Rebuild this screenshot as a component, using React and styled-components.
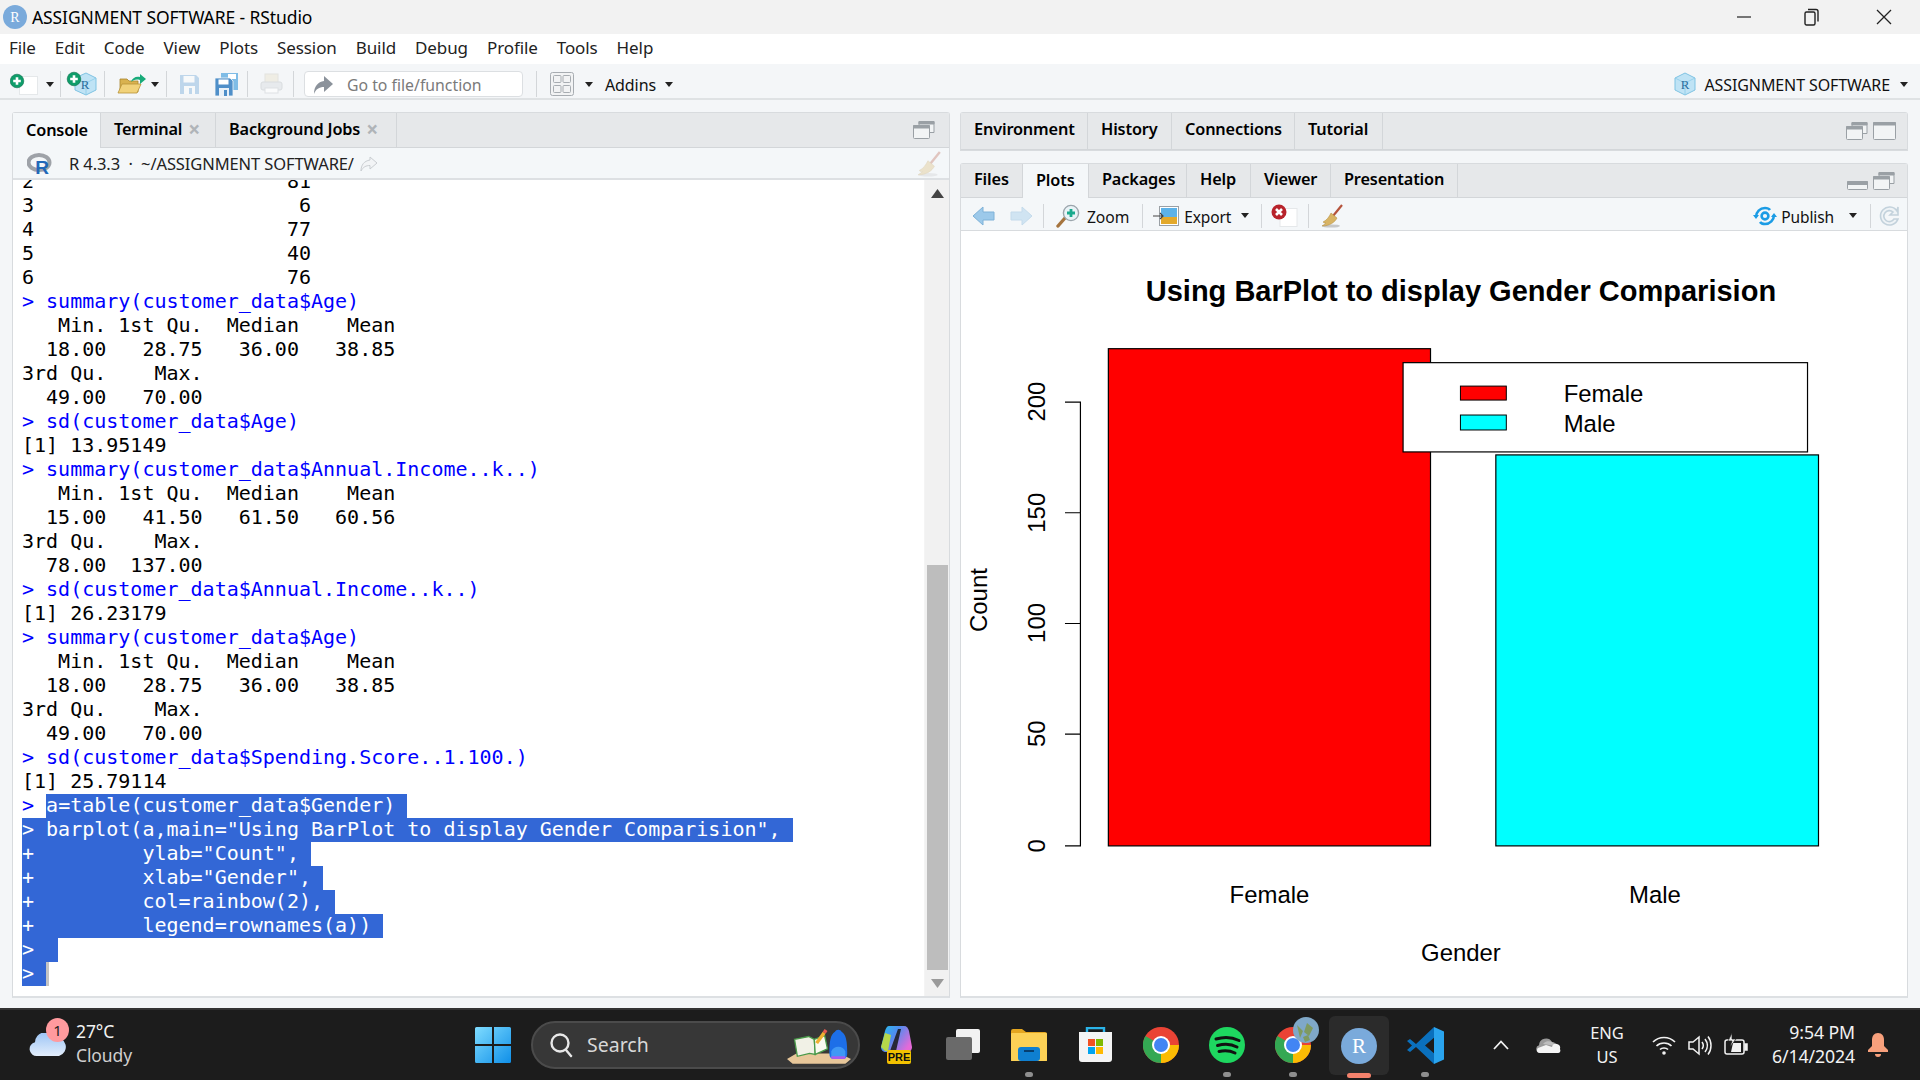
import React from "react";
import styled, { createGlobalStyle } from "styled-components";

const Global = createGlobalStyle`
  html, body { margin: 0; padding: 0; width: 1920px; height: 1080px; overflow: hidden; background: #f4f6f8; }
  * { box-sizing: border-box; }
  #root { width: 1920px; height: 1080px; }
`;

const UI = `"Noto Sans", "Open Sans", sans-serif`;

const Page = styled.div`
  width: 1920px; height: 1080px; display: flex; flex-direction: column;
  font-family: ${UI}; color: #000; background: #f4f6f8;
`;
const TitleBar = styled.div`
  height: 34px; background: #f2f2f2; display: flex; align-items: center; padding-left: 3px; flex: none;
`;
const TitleText = styled.div`font-size: 17.5px; margin-left: 5px; white-space: nowrap; flex: 1; letter-spacing: -0.1px;`;
const WinControl = styled.div`width: ${p => p.$w}px; height: 34px; display: flex; align-items: center; justify-content: center;`;
const MenuBar = styled.div`height: 30px; background: #fff; display: flex; align-items: center; padding: 0 0 3px 9px; gap: 19px; flex: none;`;
const MenuItem = styled.div`font-size: 17px; color: #222; letter-spacing: -0.1px;`;
const Toolbar = styled.div`
  height: 36px; flex: none; display: flex; align-items: center; background: #f4f6f8;
  border-bottom: 2px solid #dfe2e4; padding: 6px 0 0 10px;
`;
const Tool = styled.div`
  display: flex; align-items: center; flex: none; margin-left: ${p => p.$ml || 0}px; margin-right: ${p => p.$mr || 0}px;
`;
const Sep = styled.div`
  width: 1px; height: ${p => p.$h || 26}px; background: #d3d6d9; flex: none; margin-left: ${p => p.$ml || 0}px;
`;
const SearchBox = styled.div`
  width: 219px; height: 26px; margin-left: ${p => p.$ml}px; background: #fff; border: 1px solid #dcdfe2;
  border-radius: 4px; display: flex; align-items: center; padding: 2px 0 0 7px; gap: 13px; flex: none;
  font-size: 15.8px; color: #7a7a7a;
`;
const ToolText = styled.span`font-size: ${p => p.$s || 16}px; color: #111; margin-left: ${p => p.$ml || 0}px; white-space: nowrap; letter-spacing: -0.1px; padding-top: 2px;`;
const Push = styled.div`flex: 1;`;
const Workspace = styled.div`flex: 1; display: flex; padding: 12px 12px 10px 12px; min-height: 0;`;
const LeftPane = styled.div`
  width: 938px; flex: none; display: flex; flex-direction: column; border: 1px solid #d8dbde; border-radius: 3px 3px 0 0;
  border-bottom: 2px solid #dde0e3; background: #fff;
`;
const TabRow = styled.div`
  height: ${p => p.$h}px; flex: none; background: #e6e8ea; display: flex; align-items: stretch; border-bottom: 1px solid #d3d6d9;
`;
const Tab = styled.div`
  width: ${p => p.$w}px; flex: none; display: flex; align-items: center; padding: 0 0 ${p => p.$pb ?? 2}px ${p => p.$pl || 13}px; gap: 7px;
  font-size: 16.3px; font-weight: 600; letter-spacing: -0.15px; white-space: nowrap; color: #000;
  border-right: 1px solid #d3d6d9;
  background: ${p => p.$active ? "#f4f7f9" : "transparent"};
  margin-bottom: ${p => p.$active ? "-1px" : 0};
`;
const TabClose = styled.span`color: #b0b4b8; font-size: 21px; font-weight: 700; line-height: 1; margin-left: -1px;`;
const PaneIcons = styled.div`margin-left: auto; display: flex; align-items: center; gap: 5px; padding-right: ${p => p.$pr}px;`;
const ConsoleHeader = styled.div`
  height: 32px; flex: none; background: #f4f7f9; display: flex; align-items: center; padding: 1px 0 0 14px;
  border-bottom: 2px solid #dde0e3; font-size: 16.5px; color: #222; letter-spacing: -0.1px;
`;
const HeaderText = styled.span`margin-left: 16px; white-space: pre;`;
const ConsoleBody = styled.div`flex: 1; display: flex; min-height: 0; overflow: hidden;`;
const ConsoleText = styled.div`
  flex: 1; display: flex; flex-direction: column; justify-content: flex-end; padding: 0 0 10px 9px; overflow: hidden;
  font-family: "DejaVu Sans Mono", monospace; font-size: 20px; line-height: 22px;
`;
const Line = styled.div`
  height: 24px; flex: none; white-space: pre; color: ${p => p.$in ? "#0000ff" : "#000"};
`;
const Sel = styled.span`
  display: inline-block; height: 24px; vertical-align: top;
  background: #3367d6; color: #fff; padding-right: ${p => p.$pad ?? 12}px;
`;
const Prompt = styled.span`color: #0000ff; vertical-align: top;`;
const Cursor = styled.span`display: inline-block; width: 3px; height: 24px; background: #c4c4c4; vertical-align: top;`;
const Scrollbar = styled.div`
  width: 25px; flex: none; background: #f1f1f1; display: flex; flex-direction: column; align-items: center;
  border-left: 1px solid #f4f4f4;
`;
const ScrollArrow = styled.div`
  height: 26px; flex: none; display: flex; align-items: center; justify-content: center;
`;
const ScrollTrack = styled.div`flex: 1;`;
const ScrollThumb = styled.div`width: 21px; height: 405px; background: #bdbdbd; flex: none;`;
const RightCol = styled.div`flex: 1; margin-left: 10px; display: flex; flex-direction: column; gap: 12px; min-width: 0;`;
const TopPane = styled.div`border: 1px solid #d8dbde; border-bottom: 2px solid #d8dbde; border-radius: 3px 3px 0 0; height: 39px; flex: none; background: #e6e8ea;`;
const PlotPane = styled.div`
  flex: 1; display: flex; flex-direction: column; border: 1px solid #d8dbde; border-bottom: 2px solid #dde0e3; border-radius: 3px 3px 0 0; min-height: 0; background: #fff;
`;
const PlotToolbar = styled.div`
  height: 33px; flex: none; background: #f4f7f9; display: flex; align-items: center; border-bottom: 1px solid #d8dbde; padding: 3px 0 0 11px;
`;
const PlotArea = styled.div`flex: 1; min-height: 0; background: #fff;`;

const Taskbar = styled.div`
  height: 72px; flex: none; background: #1c1c1c; border-top: 2px solid #333; display: flex; align-items: stretch; color: #fff;
`;
const Weather = styled.div`width: 460px; flex: none; display: flex; align-items: center; padding-left: 29px; gap: 10px; position: relative;`;
const Badge = styled.div`
  position: absolute; left: 46px; top: 8px; width: 23px; height: 24px; border-radius: 50%; background: #ff9a9e; color: #222;
  font-size: 15px; display: flex; align-items: center; justify-content: center;
`;
const WeatherText = styled.div`font-size: 17.5px; line-height: 24px; color: #f2f2f2; letter-spacing: -0.1px; padding-bottom: 4px;`;
const Muted = styled.div`color: #cfcfcf;`;
const TaskSlot = styled.div`
  width: 66px; flex: none; display: flex; align-items: center; justify-content: center; position: relative;
`;
const ActiveBox = styled.div`
  width: 60px; height: 59px; border-radius: 6px; background: #2b2b2b; display: flex; align-items: center; justify-content: center; margin-top: 1px;
`;
const Dot = styled.div`
  position: absolute; bottom: 3px; left: 50%; margin-left: -4px; width: 8px; height: 5px; border-radius: 3px; background: #8f8f8f;
`;
const ActiveBar = styled.div`
  position: absolute; bottom: 2px; left: 50%; margin-left: -12px; width: 24px; height: 5px; border-radius: 3px; background: #f4826c;
`;
const SearchPill = styled.div`
  width: 329px; height: 48px; align-self: center; flex: none; margin: 0 4px 0 5px; border-radius: 24px; background: #373737;
  border: 2px solid #4b4b4b; display: flex; align-items: center; padding: 0 0 1px 16px; gap: 14px; font-size: 19.5px; color: #d8d8d8;
`;
const PillArt = styled.div`margin-left: auto; margin-right: 7px; display: flex;`;
const Tray = styled.div`flex: 1; display: flex; align-items: center; padding-left: 35px; color: #f2f2f2;`;
const Lang = styled.div`width: 52px; margin-left: 20px; text-align: center; font-size: 16.5px; line-height: 24px;`;
const TrayIcons = styled.div`display: flex; align-items: center; gap: 12px; margin-left: 19px;`;
const Clock = styled.div`width: 107px; margin-right: 2px; text-align: right; font-size: 17.7px; line-height: 24px; letter-spacing: -0.1px; padding-bottom: 3px;`;

/* ---------- drawings ---------- */
const Caret = ({ c = "#222" }) => (
  <svg width="8" height="5" viewBox="0 0 10 6"><path d="M0 0h10L5 6z" fill={c} /></svg>
);
const GreenPlus = ({ x, y }) => (
  <g>
    <circle cx={x} cy={y} r="6.8" fill="#0f9d6a" stroke="#0b6f4c" strokeWidth=".6" />
    <path d={`M${x - 3.8} ${y}h7.6M${x} ${y - 3.8}v7.6`} stroke="#fff" strokeWidth="2.6" />
  </g>
);
const NewFile = () => (
  <svg width="28" height="22" viewBox="0 0 28 22">
    <rect x="9.5" y="3.5" width="18" height="18" fill="#fff" stroke="#e5e8ea" />
    <GreenPlus x="7" y="8" />
  </svg>
);
const Cube = ({ w = 24, h = 24 }) => (
  <svg width={w} height={h} viewBox="0 0 24 24">
    <path d="M12 1l10 5v12l-10 5-10-5V6z" fill="#bfe3f5" stroke="#7fc3e3" />
    <path d="M2 6l10 5 10-5M12 11v12" fill="none" stroke="#8ccbe8" strokeWidth=".8" />
    <text x="12" y="17" fontSize="13" textAnchor="middle" fill="#2a6f9e" fontFamily="Liberation Serif, serif">R</text>
  </svg>
);
const NewProject = () => (
  <svg width="32" height="26" viewBox="0 0 32 26">
    <path d="M20 2l10 5v12l-10 5-11-5V7z" fill="#bfe3f5" stroke="#7fc3e3" />
    <path d="M9 7l11 5 10-5M20 12v12" fill="none" stroke="#8ccbe8" strokeWidth=".8" />
    <text x="19" y="18" fontSize="13" textAnchor="middle" fill="#2a6f9e" fontFamily="Liberation Serif, serif">R</text>
    <GreenPlus x="8" y="8" />
  </svg>
);
const OpenFolder = () => (
  <svg width="30" height="22" viewBox="0 0 30 22">
    <path d="M3 6h7l2 2h9v11H3z" fill="#d9b24f" stroke="#a9852f" strokeWidth=".8" />
    <path d="M1 20l4-9h19l-4 9z" fill="#f1d27a" stroke="#b89339" strokeWidth=".8" />
    <path d="M14 9c1-4 5-6 9-5V1l6 5-6 5V7c-4-1-7 0-9 2z" fill="#18ab7a" />
  </svg>
);
const Save = ({ o = 1, c = "#5b9bd5" }) => (
  <svg width="21" height="21" viewBox="0 0 21 21" opacity={o}>
    <path d="M1 1h16l3 3v16H1z" fill={c} />
    <rect x="4.5" y="2" width="11" height="6.5" fill="#fff" />
    <rect x="5" y="12" width="11" height="8" fill="#fff" />
    <rect x="10" y="14" width="3" height="6" fill={c} />
  </svg>
);
const SaveAll = () => (
  <svg width="24" height="23" viewBox="0 0 24 23">
    <path d="M7 0h17v17H7z" fill="#7fbce6" />
    <rect x="14" y="1" width="8" height="5" fill="#fff" />
    <path d="M1 5h15l3 3v15H1z" fill="#4f8fc9" stroke="#f4f6f8" strokeWidth=".8" />
    <rect x="4.5" y="6.5" width="10" height="5" fill="#fff" />
    <rect x="5" y="15" width="10" height="8" fill="#e9f1f8" />
    <rect x="10" y="17" width="3" height="6" fill="#4f8fc9" />
  </svg>
);
const Printer = () => (
  <svg width="23" height="22" viewBox="0 0 23 22" opacity=".6">
    <rect x="5" y="1" width="13" height="9" fill="#ece8d8" stroke="#d8d8d0" />
    <rect x="1" y="9" width="21" height="8" rx="2" fill="#dfe3e6" stroke="#c8ccd0" />
    <rect x="5" y="15" width="13" height="5" fill="#fff" stroke="#d0d4d8" />
  </svg>
);
const GoArrow = () => (
  <svg width="22" height="22" viewBox="0 0 22 22"><path d="M12 2l9 8-9 8v-5c-5 0-8 2-10 7 0-8 4-12 10-13z" fill="#8b929b" /></svg>
);
const PaneGrid = () => (
  <svg width="24" height="24" viewBox="0 0 24 24" fill="#f2f3f4" stroke="#a7acb1">
    <rect x=".5" y=".5" width="23" height="23" rx="2" />
    <rect x="3.5" y="3.5" width="7.5" height="7" rx="1" />
    <rect x="13" y="3.5" width="7.5" height="7" rx="1" />
    <rect x="3.5" y="13.5" width="7.5" height="7" rx="1" />
    <rect x="13" y="13.5" width="7.5" height="7" rx="1" />
  </svg>
);
const RLogo = () => (
  <svg width="26" height="22" viewBox="0 0 26 22">
    <ellipse cx="12" cy="9.5" rx="10.500" ry="7.500" fill="none" stroke="#9ea2a8" strokeWidth="4" />
    <text x="15" y="21" fontSize="19" fontWeight="700" textAnchor="middle" fill="#2268b8" fontFamily="Liberation Sans, sans-serif">R</text>
  </svg>
);
const ShareArrow = () => (
  <svg width="19" height="16" viewBox="0 0 19 16"><path d="M11 1l7 6-7 6V9.5C7 9.500 4 11 2 15c0-6 3-10 9-11z" fill="#f2f4f6" stroke="#c9cdd1" /></svg>
);
const Broom = ({ o = 1, w = 24, h = 24 }) => (
  <svg width={w} height={h} viewBox="0 0 24 24" opacity={o}>
    <ellipse cx="11" cy="22" rx="9" ry="1.6" fill="#9a9a9a" opacity=".5" />
    <path d="M22 1L13 12" stroke="#b5533c" strokeWidth="2.2" />
    <path d="M11 9l6 5c-2 4-7 8-15 8 3-2 4-3 4-3-1 0-2 0-3-1 4-2 6-5 8-9z" fill="#d8b464" stroke="#b08a3c" strokeWidth=".5" />
  </svg>
);
const WinBtn = ({ v = "front" }) => (
  <svg width="22" height="18" viewBox="0 0 22 18" fill="#f2f4f5" stroke="#9aa0a5">
    {v === "front" && <path d="M6 4.500V.5h15v11h-4" />}
    {v === "front" && <path d="M6 .5h15v2.500H6z" fill="#9aa0a5" />}
    <rect x=".5" y="4.500" width="16" height="13" rx="1" />
    <path d="M.5 4.500h16v2.500H.5z" fill="#9aa0a5" />
  </svg>
);
const MaxBtn = () => (
  <svg width="23" height="18" viewBox="0 0 23 18" fill="#f2f4f5" stroke="#9aa0a5">
    <rect x=".5" y=".5" width="22" height="17" rx="1" />
    <path d="M.5 .5h22v2.500H.5z" fill="#9aa0a5" />
  </svg>
);
const MinBtn = () => (
  <svg width="21" height="18" viewBox="0 0 21 18" fill="#f2f4f5" stroke="#9aa0a5">
    <rect x=".5" y="9.500" width="20" height="8" rx="1" />
    <path d="M.5 9.500h20v3H.5z" fill="#9aa0a5" />
  </svg>
);
const NavArrow = ({ dir, o = 1 }) => (
  <svg width="23" height="20" viewBox="0 0 23 20" opacity={o} style={{ transform: dir === "r" ? "scaleX(-1)" : undefined }}>
    <path d="M1 10l10-9v5h11v8H11v5z" fill="#9cc9ea" stroke="#7eb2d8" />
  </svg>
);
const ZoomIcon = () => (
  <svg width="24" height="24" viewBox="0 0 24 24">
    <path d="M9 14L2 22" stroke="#a5743e" strokeWidth="3.4" strokeLinecap="round" />
    <circle cx="15" cy="9" r="7.6" fill="#e9f3f7" stroke="#9ba5ac" strokeWidth="1.4" />
    <path d="M11 9h8M15 5v8" stroke="#1aaa8e" strokeWidth="2.8" />
  </svg>
);
const ExportIcon = () => (
  <svg width="27" height="22" viewBox="0 0 27 22">
    <rect x="6.500" y="1.500" width="19" height="19" fill="#fff" stroke="#9aa0a5" />
    <rect x="8" y="3" width="16" height="9" fill="#5cb2e8" />
    <rect x="8" y="12" width="16" height="7" fill="#e3a92b" />
    <path d="M0 11h10M7 8l3 3-3 3" stroke="#444" strokeWidth="1.2" fill="none" />
  </svg>
);
const RemoveIcon = () => (
  <svg width="27" height="23" viewBox="0 0 27 23">
    <rect x="9" y="4.500" width="17" height="18" fill="#fff" stroke="#e5e8ea" />
    <circle cx="8" cy="8" r="7.500" fill="#b8232b" />
    <path d="M5 5l6 6M11 5l-6 6" stroke="#fff" strokeWidth="2.6" />
  </svg>
);
const PublishIcon = () => (
  <svg width="24" height="20" viewBox="0 0 24 20" fill="none" stroke="#1b9ce5" strokeWidth="2.6">
    <circle cx="12" cy="10" r="3.4" />
    <path d="M3 11c0-5 4-9 9-9 2 0 4 .6 5 2M21 9c0 5-4 9-9 9-2 0-4-.6-5-2" />
    <path d="M0 9l3 4 3-4zM18 11l3-4 3 4z" fill="#1b9ce5" stroke="none" />
  </svg>
);
const RefreshIcon = () => (
  <svg width="23" height="23" viewBox="0 0 23 23" fill="none" stroke="#c3d2dc" strokeWidth="1.6">
    <path d="M19 7a9 9 0 1 0 1 8h-4a5.500 5.500 0 1 1-1-7l-3 3h8V3z" fill="#eef3f6" />
  </svg>
);

const WinLogo = () => (
  <svg width="36" height="36" viewBox="0 0 36 36">
    <defs><linearGradient id="wl" x1="0" y1="0" x2="1" y2="1"><stop offset="0" stopColor="#7fdcff" /><stop offset="1" stopColor="#0f8fe8" /></linearGradient></defs>
    <path d="M0 1.500A1.500 1.500 0 0 1 1.500 0H17v17H0zM19 0h15.500A1.500 1.500 0 0 1 36 1.500V17H19zM0 19h17v17H1.500A1.500 1.500 0 0 1 0 34.500zM19 19h17v15.500a1.500 1.500 0 0 1-1.500 1.500H19z" fill="url(#wl)" />
  </svg>
);
const SearchGlass = () => (
  <svg width="24" height="26" viewBox="0 0 24 26" fill="none" stroke="#e8e8e8" strokeWidth="2.4">
    <circle cx="11" cy="11" r="8.500" /><path d="M17 18l5 6" strokeLinecap="round" />
  </svg>
);
const BookArt = () => (
  <svg width="64" height="40" viewBox="0 0 68 42">
    <path d="M0 36l10-6h46l12 6-6 5H6z" fill="#e8c79a" />
    <path d="M8 15l15-3 6 3 1 16-6-1-13 3z" fill="#f1f1e6" stroke="#4a9a4a" strokeWidth="1.4" />
    <path d="M29 15l11-4 3 14-13 6z" fill="#fafaf0" stroke="#4a9a4a" strokeWidth="1.4" />
    <path d="M30 18l8-11 3 2-8 11z" fill="#f0b030" /><path d="M38 7l2-3 3 2-2 3z" fill="#e85a50" />
    <path d="M45 30c0-12 1-20 6-23 1-3 6-3 7 0 5 3 6 11 6 23 0 4-2 6-5 6h-9c-3 0-5-2-5-6z" fill="#1d6fe8" />
    <path d="M47 28c2-7 13-7 15 0v5c0 2-1 3-3 3h-9c-2 0-3-1-3-3z" fill="#3f98f5" />
    <path d="M47 33h15v2c0 1-1 1-3 1h-9c-2 0-3 0-3-3z" fill="#a65cf0" />
  </svg>
);
const Copilot = () => (
  <svg width="36" height="40" viewBox="0 0 36 40">
    <defs><linearGradient id="cp" x1="0" y1="0" x2="1" y2=".6"><stop offset="0" stopColor="#25c4ea" /><stop offset=".45" stopColor="#4e8df0" /><stop offset="1" stopColor="#e46ad8" /></linearGradient></defs>
    <path d="M10 1h15c3 0 4 2 5 5l3 16c0 3-2 5-5 5H7c-3 0-5-2-5-5L6 6c1-3 2-5 4-5z" fill="url(#cp)" />
    <path d="M2 22L6 8l6 2-3 16H6z" fill="#b6d84a" />
    <path d="M19 4l3 0-5 22-6 0z" fill="#181818" opacity=".85" />
    <rect x="8" y="25" width="24" height="14" rx="2" fill="#f2c100" />
    <text x="20" y="36" fontSize="11" fontWeight="700" textAnchor="middle" fill="#111" fontFamily="Liberation Sans, sans-serif">PRE</text>
  </svg>
);
const TaskView = () => (
  <svg width="36" height="36" viewBox="0 0 36 36">
    <rect x="11" y="2" width="24" height="24" rx="2" fill="#f2f2f2" />
    <rect x="1" y="10" width="26" height="23" rx="2" fill="#6a6a6a" />
  </svg>
);
const Folder = () => (
  <svg width="36" height="34" viewBox="0 0 36 34">
    <path d="M0 3a2 2 0 0 1 2-2h9l4 3h19a2 2 0 0 1 2 2v27H0z" fill="#e4a620" />
    <rect x="0" y="5" width="36" height="28" rx="1" fill="#fcd156" />
    <rect x="7" y="19" width="22" height="14" rx="3" fill="#0f7fd0" />
    <rect x="13" y="22" width="10" height="2" fill="#063f70" />
  </svg>
);
const Store = () => (
  <svg width="35" height="36" viewBox="0 0 35 36">
    <path d="M9 6V1h17v5" fill="none" stroke="#2ab3e8" strokeWidth="2.4" />
    <path d="M1 5h33v27a3 3 0 0 1-3 3H4a3 3 0 0 1-3-3z" fill="#f4f4f4" />
    <rect x="10" y="12" width="7" height="7" fill="#f25022" /><rect x="18" y="12" width="7" height="7" fill="#7fba00" />
    <rect x="10" y="20" width="7" height="7" fill="#00a4ef" /><rect x="18" y="20" width="7" height="7" fill="#ffb900" />
  </svg>
);
const ChromeShape = () => (
  <g>
    <circle cx="18" cy="18" r="18" fill="#ea4335" />
    <path d="M18 18h18A18 18 0 0 1 18 36z" fill="#fbbc04" />
    <path d="M18 18L2.400 9A18 18 0 0 0 18 36z" fill="#34a853" />
    <circle cx="18" cy="18" r="9" fill="#fff" /><circle cx="18" cy="18" r="7" fill="#4285f4" />
  </g>
);
const Chrome = () => (
  <svg width="36" height="36" viewBox="0 0 36 36"><ChromeShape /></svg>
);
const Spotify = () => (
  <svg width="36" height="36" viewBox="0 0 36 36">
    <circle cx="18" cy="18" r="18" fill="#1ed760" />
    <path d="M7 12c8-2.500 16-2 23 1.500M8.500 18.500c7-2 14-1.500 19.500 1.500M10 24.500c6-1.500 11-1 16 1.500" fill="none" stroke="#111" strokeWidth="3" strokeLinecap="round" />
  </svg>
);
const ChromeBadged = () => (
  <svg width="44" height="46" viewBox="0 0 44 46" style={{ marginLeft: 8, marginTop: -10 }}>
    <g transform="translate(0 10)"><ChromeShape /></g>
    <circle cx="31" cy="13" r="13" fill="#7fa8c8" />
    <path d="M22 8l6 6-3 7zM32 6l6 5-4 8-5-4zM28 20l5-2 2 5-5 2z" fill="#7f9a60" />
  </svg>
);
const RCircle = ({ s = 36 }) => (
  <svg width={s} height={s} viewBox="0 0 36 36">
    <circle cx="18" cy="18" r="18" fill="#7aaadb" />
    <text x="18" y="25" fontSize="21" textAnchor="middle" fill="#fff" fontFamily="Liberation Serif, serif">R</text>
  </svg>
);
const VSCode = () => (
  <svg width="37" height="37" viewBox="0 0 37 37">
    <path d="M27 0L9 17 3 12 0 14l5 4.500L0 23l3 2 6-5 18 17 2-9-11-9.500L29 9z" fill="#0a70bd" />
    <path d="M27 0l10 4.500v28L27 37z" fill="#2aa4ee" />
  </svg>
);
const WeatherCloud = () => (
  <svg width="37" height="24" viewBox="0 0 37 24">
    <defs><linearGradient id="wc" x1="0" y1="0" x2="0" y2="1"><stop offset="0" stopColor="#9cc4f5" /><stop offset="1" stopColor="#e3eefc" /></linearGradient></defs>
    <path d="M8 23a7 7 0 0 1-2-13.800A10 10 0 0 1 25 5a8.500 8.500 0 0 1 5 18z" fill="url(#wc)" />
  </svg>
);
const ChevUp = () => (
  <svg width="16" height="10" viewBox="0 0 16 10"><path d="M1 9l7-7.500L15 9" fill="none" stroke="#f2f2f2" strokeWidth="1.8" /></svg>
);
const OneDrive = () => (
  <svg width="25" height="18" viewBox="0 0 25 18">
    <path d="M4 17a4 4 0 0 1-1-7.800A7 7 0 0 1 16 6a5 5 0 0 1 5 5h-9z" fill="#9a9a9a" />
    <path d="M7 8a7 7 0 0 1 9-2l4 4z" fill="#bdbdbd" />
    <path d="M4 17c-3 0-4-3-2-5l8-3 6 2a4 4 0 0 1 8 2c1 2 0 4-2 4z" fill="#f4f4f4" />
  </svg>
);
const Wifi = () => (
  <svg width="24" height="20" viewBox="0 0 24 20" fill="none" stroke="#f2f2f2" strokeWidth="1.7">
    <path d="M1 7c6-6 16-6 22 0M4.500 11c4-4 11-4 15 0M8 14.500c2-2 6-2 8 0" /><circle cx="12" cy="18" r="1.800" fill="#f2f2f2" stroke="none" />
  </svg>
);
const Speaker = () => (
  <svg width="24" height="21" viewBox="0 0 24 21" fill="none" stroke="#f2f2f2" strokeWidth="1.5">
    <path d="M1 7h4l6-5v17l-6-5H1z" /><path d="M14 7c1.500 2 1.500 5 0 7M17 4c3 4 3 9 0 13M20 1.500c4 5 4 13 0 18" />
  </svg>
);
const Battery = () => (
  <svg width="24" height="24" viewBox="0 0 24 24" fill="none" stroke="#f2f2f2" strokeWidth="1.5">
    <path d="M5 7H3a2 2 0 0 0-2 2v10a2 2 0 0 0 2 2h15a2 2 0 0 0 2-2V9a2 2 0 0 0-2-2h-7" />
    <path d="M21 11h2v6h-2z" fill="#f2f2f2" /><path d="M7 19l2-9h8v9z" fill="#f2f2f2" stroke="none" />
    <path d="M8 0L4 8h4l-2 6 6-8H8z" fill="#f2f2f2" stroke="#1c1c1c" strokeWidth=".7" />
  </svg>
);
const Bell = () => (
  <svg width="20" height="24" viewBox="0 0 20 24">
    <path d="M10 0c4 0 6 3 6 7v6l4 4v2H0v-2l4-4V7c0-4 2-7 6-7z" fill="#f7a07c" /><path d="M7 21h6c0 2-1 3-3 3s-3-1-3-3z" fill="#f7a07c" />
  </svg>
);

const ScrollTri = ({ up }) => (
  <svg width="13" height="9" viewBox="0 0 13 9"><path d={up ? "M0 9h13L6.500 0z" : "M0 0h13L6.500 9z"} fill={up ? "#444" : "#9a9a9a"} /></svg>
);

/* ---------- data ---------- */
const log = [
  ["2                     81"], ["3                      6"], ["4                     77"], ["5                     40"], ["6                     76"],
  ["> summary(customer_data$Age)", 1],
  ["   Min. 1st Qu.  Median    Mean "], ["  18.00   28.75   36.00   38.85 "], ["3rd Qu.    Max. "], ["  49.00   70.00 "],
  ["> sd(customer_data$Age)", 1], ["[1] 13.95149"],
  ["> summary(customer_data$Annual.Income..k..)", 1],
  ["   Min. 1st Qu.  Median    Mean "], ["  15.00   41.50   61.50   60.56 "], ["3rd Qu.    Max. "], ["  78.00  137.00 "],
  ["> sd(customer_data$Annual.Income..k..)", 1], ["[1] 26.23179"],
  ["> summary(customer_data$Age)", 1],
  ["   Min. 1st Qu.  Median    Mean "], ["  18.00   28.75   36.00   38.85 "], ["3rd Qu.    Max. "], ["  49.00   70.00 "],
  ["> sd(customer_data$Spending.Score..1.100.)", 1], ["[1] 25.79114"],
];
const selected = [
  `> barplot(a,main="Using BarPlot to display Gender Comparision",`,
  `+         ylab="Count",`,
  `+         xlab="Gender",`,
  `+         col=rainbow(2),`,
  `+         legend=rownames(a))`,
  `> `,
];
const menu = ["File", "Edit", "Code", "View", "Plots", "Session", "Build", "Debug", "Profile", "Tools", "Help"];
const topTabs = [["Environment", 127], ["History", 84], ["Connections", 123], ["Tutorial", 88]];
const plotTabs = [["Files", 62], ["Plots", 66, true], ["Packages", 98], ["Help", 64], ["Viewer", 80], ["Presentation", 127]];

const PlotSvg = styled.svg`display: block; width: 100%; height: 100%; font-family: "Liberation Sans", Arial, sans-serif;`;

/* chart is drawn in screen coordinates shifted by the pane origin */
const Chart = () => (
  <PlotSvg viewBox="961 230 946 767">
    <text x="1461" y="300.500" fontSize="29.100" fontWeight="700" textAnchor="middle">Using BarPlot to display Gender Comparision</text>
    <rect x="1107.500" y="348" width="323" height="498.500" fill="#ff0000" stroke="#000" strokeWidth="1.200" />
    <rect x="1496" y="454.500" width="323.500" height="392" fill="#00ffff" stroke="#000" strokeWidth="1.200" />
    <path d="M1079.500 401v446M1064 401.500h15.500M1064 512.500h15.500M1064 623.500h15.500M1064 734.500h15.500M1064 846.500h15.500" stroke="#000" strokeWidth="1.200" fill="none" />
    {[[846.5, "0"], [734, "50"], [623, "100"], [512.5, "150"], [401, "200"]].map(([y, t]) => (
      <text key={t} transform={`translate(1044 ${y}) rotate(-90)`} fontSize="24" textAnchor="middle">{t}</text>
    ))}
    <text transform="translate(986 600) rotate(-90)" fontSize="24" textAnchor="middle">Count</text>
    <text x="1269" y="904" fontSize="24" textAnchor="middle">Female</text>
    <text x="1655.500" y="904" fontSize="24" textAnchor="middle">Male</text>
    <text x="1461" y="962" fontSize="24" textAnchor="middle">Gender</text>
    <rect x="1403" y="362" width="405.500" height="89.500" fill="#fff" stroke="#000" strokeWidth="1.200" />
    <rect x="1460.500" y="385.500" width="46" height="14" fill="#ff0000" stroke="#000" />
    <rect x="1460.500" y="414.500" width="46" height="15" fill="#00ffff" stroke="#000" />
    <text x="1564" y="401" fontSize="24">Female</text>
    <text x="1564" y="432" fontSize="24">Male</text>
  </PlotSvg>
);

export default function App() {
  return (
    <Page>
      <Global />
      <TitleBar>
        <RCircle s={24} />
        <TitleText>ASSIGNMENT SOFTWARE - RStudio</TitleText>
        <WinControl $w={64}><svg width="14" height="2" viewBox="0 0 14 2"><path d="M0 1h14" stroke="#222" strokeWidth="1.200" /></svg></WinControl>
        <WinControl $w={72}><svg width="16" height="18" viewBox="0 0 16 18" fill="none" stroke="#222" strokeWidth="1.400"><rect x="1" y="4" width="10" height="13" rx="1.500" /><path d="M4 1.500h8a2 2 0 0 1 2 2v10" /></svg></WinControl>
        <WinControl $w={72}><svg width="16" height="16" viewBox="0 0 16 16"><path d="M1 1l14 14M15 1L1 15" stroke="#222" strokeWidth="1.300" /></svg></WinControl>
      </TitleBar>
      <MenuBar>{menu.map(m => <MenuItem key={m}>{m}</MenuItem>)}</MenuBar>
      <Toolbar>
        <Tool><NewFile /></Tool>
        <Tool $ml={8}><Caret /></Tool>
        <Sep $ml={6} />
        <Tool $ml={5}><NewProject /></Tool>
        <Sep $ml={6} />
        <Tool $ml={12}><OpenFolder /></Tool>
        <Tool $ml={4}><Caret /></Tool>
        <Sep $ml={7} />
        <Tool $ml={12}><Save o={0.35} /></Tool>
        <Tool $ml={14}><SaveAll /></Tool>
        <Sep $ml={9} />
        <Tool $ml={12}><Printer /></Tool>
        <Sep $ml={10} />
        <SearchBox $ml={10}><GoArrow />Go to file/function</SearchBox>
        <Sep $ml={13} />
        <Tool $ml={13}><PaneGrid /></Tool>
        <Tool $ml={11}><Caret /></Tool>
        <ToolText $ml={12}>Addins</ToolText>
        <Tool $ml={9}><Caret /></Tool>
        <Push />
        <Tool><Cube /></Tool>
        <ToolText $ml={7}>ASSIGNMENT SOFTWARE</ToolText>
        <Tool $ml={10} $mr={12}><Caret /></Tool>
      </Toolbar>
      <Workspace>
        <LeftPane>
          <TabRow $h={35}>
            <Tab $w={88} $active>Console</Tab>
            <Tab $w={115}>Terminal<TabClose>×</TabClose></Tab>
            <Tab $w={181}>Background Jobs<TabClose>×</TabClose></Tab>
            <PaneIcons $pr={14}><WinBtn /></PaneIcons>
          </TabRow>
          <ConsoleHeader>
            <RLogo />
            <HeaderText>R 4.3.3  ·  ~/ASSIGNMENT SOFTWARE/</HeaderText>
            <Tool $ml={5}><ShareArrow /></Tool>
            <Push />
            <Tool $mr={6}><Broom o={0.3} w={28} h={26} /></Tool>
          </ConsoleHeader>
          <ConsoleBody>
            <ConsoleText>
              {log.map(([t, isIn], i) => <Line key={i} $in={isIn}>{t}</Line>)}
              <Line><Prompt>&gt; </Prompt><Sel>a=table(customer_data$Gender)</Sel></Line>
              {selected.map(t => <Line key={t}><Sel>{t}</Sel></Line>)}
              <Line><Sel $pad={0}>&gt; </Sel><Cursor /></Line>
            </ConsoleText>
            <Scrollbar>
              <ScrollArrow><ScrollTri up /></ScrollArrow>
              <ScrollTrack />
              <ScrollThumb />
              <ScrollArrow><ScrollTri /></ScrollArrow>
            </Scrollbar>
          </ConsoleBody>
        </LeftPane>
        <RightCol>
          <TopPane>
            <TabRow $h={37}>
              {topTabs.map(([t, w]) => <Tab key={t} $w={w} $pb={5}>{t}</Tab>)}
              <PaneIcons $pr={11}><WinBtn /><MaxBtn /></PaneIcons>
            </TabRow>
          </TopPane>
          <PlotPane>
            <TabRow $h={34}>
              {plotTabs.map(([t, w, a]) => <Tab key={t} $w={w} $active={a} $pb={3}>{t}</Tab>)}
              <PaneIcons $pr={12}><MinBtn /><WinBtn /></PaneIcons>
            </TabRow>
            <PlotToolbar>
              <Tool><NavArrow /></Tool>
              <Tool $ml={15}><NavArrow dir="r" o={0.4} /></Tool>
              <Sep $ml={10} $h={24} />
              <Tool $ml={12}><ZoomIcon /></Tool>
              <ToolText $ml={7} $s={15.7}>Zoom</ToolText>
              <Sep $ml={13} $h={24} />
              <Tool $ml={10}><ExportIcon /></Tool>
              <ToolText $ml={4} $s={15.5}>Export</ToolText>
              <Tool $ml={10}><Caret /></Tool>
              <Sep $ml={12} $h={24} />
              <Tool $ml={9}><RemoveIcon /></Tool>
              <Sep $ml={10} $h={24} />
              <Tool $ml={11}><Broom /></Tool>
              <Push />
              <Tool><PublishIcon /></Tool>
              <ToolText $ml={4} $s={15.5}>Publish</ToolText>
              <Tool $ml={15}><Caret /></Tool>
              <Sep $ml={13} $h={24} />
              <Tool $ml={7} $mr={6}><RefreshIcon /></Tool>
            </PlotToolbar>
            <PlotArea><Chart /></PlotArea>
          </PlotPane>
        </RightCol>
      </Workspace>
      <Taskbar>
        <Weather>
          <WeatherCloud />
          <Badge>1</Badge>
          <WeatherText>27°C<Muted>Cloudy</Muted></WeatherText>
        </Weather>
        <TaskSlot><WinLogo /></TaskSlot>
        <SearchPill><SearchGlass />Search<PillArt><BookArt /></PillArt></SearchPill>
        <TaskSlot><Copilot /></TaskSlot>
        <TaskSlot><TaskView /></TaskSlot>
        <TaskSlot><Folder /><Dot /></TaskSlot>
        <TaskSlot><Store /></TaskSlot>
        <TaskSlot><Chrome /></TaskSlot>
        <TaskSlot><Spotify /><Dot /></TaskSlot>
        <TaskSlot><ChromeBadged /><Dot /></TaskSlot>
        <TaskSlot><ActiveBox><RCircle /></ActiveBox><ActiveBar /></TaskSlot>
        <TaskSlot><VSCode /><Dot /></TaskSlot>
        <Tray>
          <ChevUp />
          <Tool $ml={27}><OneDrive /></Tool>
          <Lang>ENG<br />US</Lang>
          <TrayIcons><Wifi /><Speaker /><Battery /></TrayIcons>
          <Clock>9:54 PM<br />6/14/2024</Clock>
          <Tool $ml={11}><Bell /></Tool>
        </Tray>
      </Taskbar>
    </Page>
  );
}
